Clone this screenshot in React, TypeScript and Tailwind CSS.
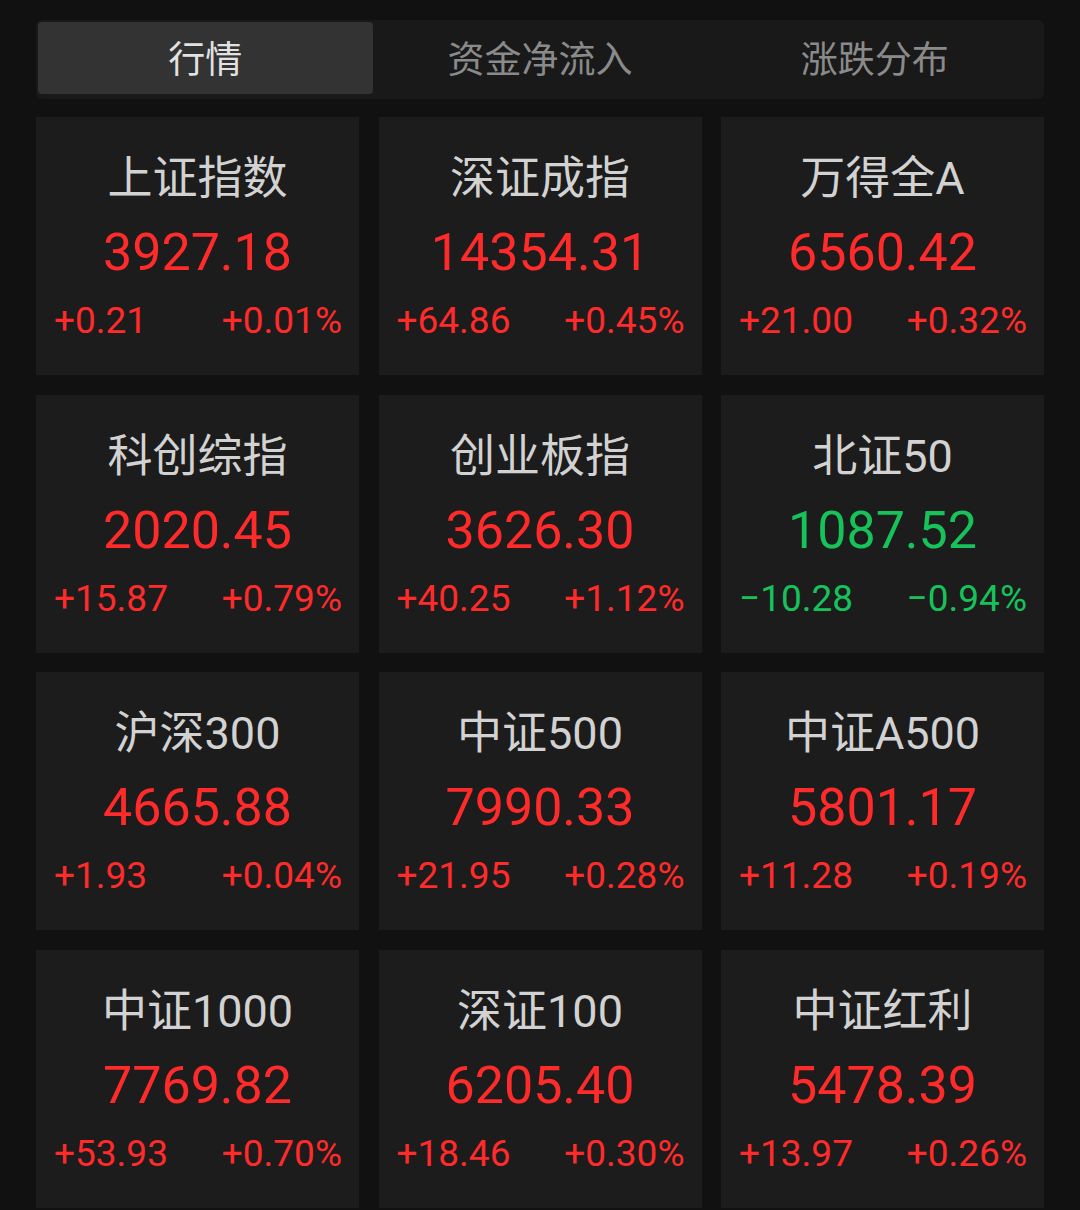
import React from 'react';

type Quote = {
  name: string;
  price: string;
  change: string;
  pct: string;
  up: boolean;
};

const quotes: Quote[] = [
  { name: '上证指数', price: '3927.18', change: '+0.21', pct: '+0.01%', up: true },
  { name: '深证成指', price: '14354.31', change: '+64.86', pct: '+0.45%', up: true },
  { name: '万得全A', price: '6560.42', change: '+21.00', pct: '+0.32%', up: true },
  { name: '科创综指', price: '2020.45', change: '+15.87', pct: '+0.79%', up: true },
  { name: '创业板指', price: '3626.30', change: '+40.25', pct: '+1.12%', up: true },
  { name: '北证50', price: '1087.52', change: '-10.28', pct: '-0.94%', up: false },
  { name: '沪深300', price: '4665.88', change: '+1.93', pct: '+0.04%', up: true },
  { name: '中证500', price: '7990.33', change: '+21.95', pct: '+0.28%', up: true },
  { name: '中证A500', price: '5801.17', change: '+11.28', pct: '+0.19%', up: true },
  { name: '中证1000', price: '7769.82', change: '+53.93', pct: '+0.70%', up: true },
  { name: '深证100', price: '6205.40', change: '+18.46', pct: '+0.30%', up: true },
  { name: '中证红利', price: '5478.39', change: '+13.97', pct: '+0.26%', up: true },
];

const tabs = ['行情', '资金净流入', '涨跌分布'];

// the app's font draws a wide minus, so use the real minus sign
const signed = (s: string) => s.replace(/^-/, '\u2212');

function QuoteCard({ q }: { q: Quote }) {
  const color = q.up ? 'text-[#ff2b2b]' : 'text-[#17c25a]';
  return (
    <div className="flex h-[258px] flex-col items-center bg-[#1c1c1c] pt-[36px]">
      <div className="text-[45px] leading-[52px] text-[#d2d2d2]">{q.name}</div>
      <div className={`mt-[18px] text-[52px] leading-[60px] ${color}`}>{q.price}</div>
      <div className={`mt-[18px] flex w-full justify-between pl-[18px] pr-[17px] text-[37px] leading-[40px] ${color}`}>
        <span>{signed(q.change)}</span>
        <span>{signed(q.pct)}</span>
      </div>
    </div>
  );
}

export default function App() {
  return (
    <div
      className="min-h-[1210px] bg-[#111111] px-[36px] pt-[20px]"
      style={{ fontFamily: 'Roboto, "Noto Sans CJK SC", sans-serif' }}
    >
      {/* Segmented tabs */}
      <div className="grid grid-cols-3 rounded-[6px] bg-[#191919] px-[2px] pb-[5px] pt-[2px]">
        {tabs.map((t, i) => (
          <div
            key={t}
            className={
              i === 0
                ? 'flex h-[72px] items-center justify-center rounded-[4px] bg-[#333333] pt-[6px] text-[37px] text-[#e2e2e2]'
                : 'flex h-[72px] items-center justify-center pt-[6px] text-[37px] text-[#8a8a8a]'
            }
          >
            {t}
          </div>
        ))}
      </div>

      {/* Quote grid */}
      <div className="mt-[18px] grid grid-cols-3 gap-x-[19.5px] gap-y-[19.5px]">
        {quotes.map((q) => (
          <QuoteCard key={q.name} q={q} />
        ))}
      </div>
    </div>
  );
}
